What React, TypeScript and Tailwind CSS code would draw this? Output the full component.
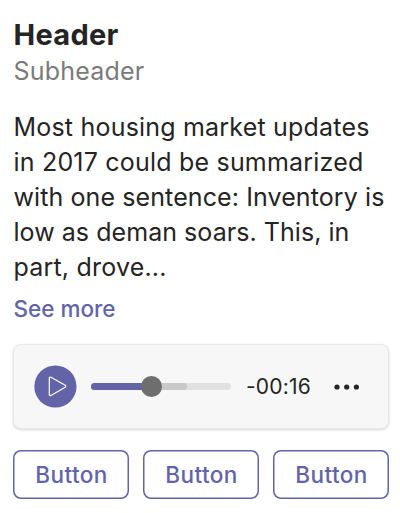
const lines = [
  { text: 'Most housing market updates', track: 'tracking-[0.2px]' },
  { text: 'in 2017 could be summarized', track: 'tracking-[0.2px]' },
  { text: 'with one sentence: Inventory is', track: 'tracking-[0.1px]' },
  { text: 'low as deman soars. This, in', track: 'tracking-[0.05px]' },
  { text: 'part, drove...', track: 'tracking-[0.2px]' },
];

function AudioPlayer() {
  return (
    <div className="mt-[20px] flex h-[85px] w-[376px] items-center rounded-lg border border-[#e8e8e8] bg-[#f7f7f7] pb-px pl-5 shadow-[0_1px_3px_rgba(0,0,0,0.16)]">
      <button aria-label="Play" className="size-[43px] shrink-0">
        <svg viewBox="0 0 43 43" className="size-full" fill="none">
          <circle cx="21.4" cy="21.5" r="21.1" fill="#6264a7" />
          <path
            d="M15.3 13.2v16.2c0 .9.9 1.4 1.7 1l14.2-8.2c.8-.5.8-1.4 0-1.9L17 12.2c-.8-.4-1.7.1-1.7 1Z"
            stroke="#fff"
            strokeWidth="1.2"
          />
        </svg>
      </button>
      <div className="relative ml-[13.5px] h-[7px] w-[140px] shrink-0 rounded-full bg-[#e1e1e1]">
        <div className="absolute inset-y-0 left-0 w-[96px] rounded-full bg-[#c8c8c8]" />
        <div className="absolute inset-y-0 left-0 w-[61px] rounded-full bg-[#6264a7]" />
        <div className="absolute -top-[7px] left-[50.5px] size-[21px] rounded-full bg-[#6e6e6e]" />
      </div>
      <span className="ml-[15.5px] w-[67px] shrink-0 text-[21px] leading-none tracking-[0.2px] whitespace-nowrap text-[#252424]">
        -00:16
      </span>
      <svg viewBox="0 0 26 6" className="mt-[2px] ml-[21px] h-[6px] w-[26px] shrink-0" fill="#252424">
        <circle cx="3" cy="3" r="2.6" />
        <circle cx="12.7" cy="3" r="2.6" />
        <circle cx="22.4" cy="3" r="2.6" />
      </svg>
    </div>
  );
}

export default function App() {
  return (
    <main className="h-[513px] w-[400px] overflow-hidden bg-white pt-[17px] pl-[13px] font-['Inter',sans-serif] text-[#252424]">
      <h1 className="pl-[0.5px] text-[29px] leading-9 font-bold tracking-[0.3px]">Header</h1>
      <h2 className="pl-[0.5px] text-[25px] leading-9 tracking-[0.2px] text-[#7b7a7a]">Subheader</h2>
      <div className="mt-[21px] pl-[0.5px] text-[25px] leading-[35px]">
        {lines.map((line) => (
          <p key={line.text} className={`w-max whitespace-nowrap ${line.track}`}>
            {line.text}
          </p>
        ))}
      </div>
      <a className="mt-[9px] block pl-[0.5px] text-[22.5px] leading-[30px] font-medium text-[#6264a7]">
        See more
      </a>
      <AudioPlayer />
      <div className="mt-[21px] flex gap-[14px]">
        {[0, 1, 2].map((i) => (
          <button
            key={i}
            className="flex h-[49px] w-[116px] items-center justify-center rounded-lg pt-px pl-px text-[22.5px] font-medium tracking-[0.4px] text-[#6264a7] shadow-[inset_0_0_0_1.5px_#6264a7]"
          >
            Button
          </button>
        ))}
      </div>
    </main>
  );
}
